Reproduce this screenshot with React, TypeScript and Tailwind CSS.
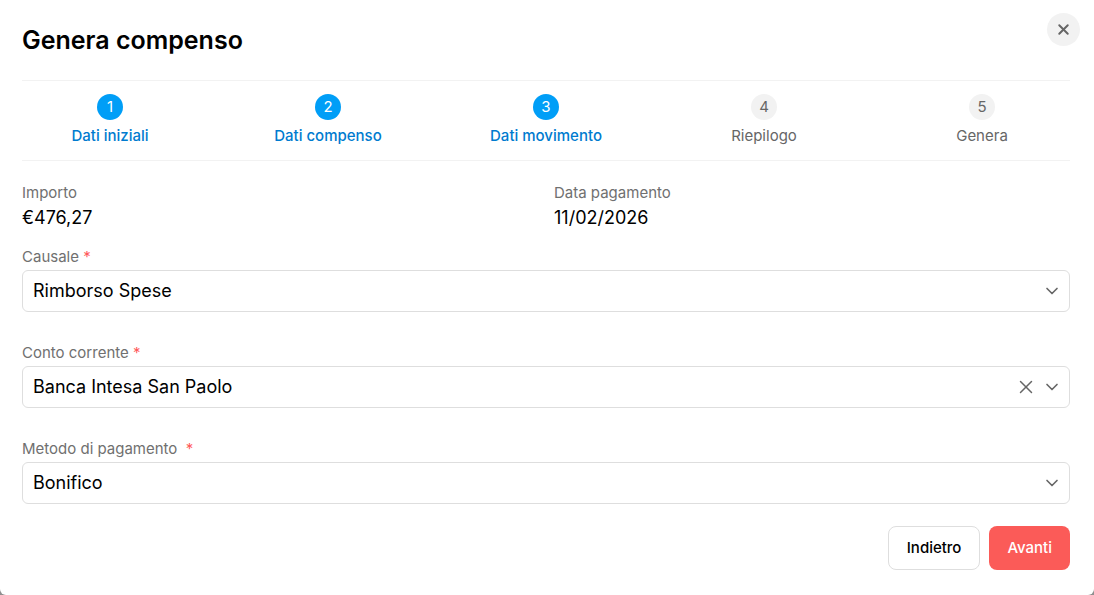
import { ReactNode } from "react";
import { ChevronDown, X } from "lucide-react";
import { clsx } from "clsx";

interface SelectFieldProps {
    id: string;
    label: string;
    options: string[];
    clearable?: boolean;
}

const steps = ["Dati iniziali", "Dati compenso", "Dati movimento", "Riepilogo", "Genera"];
const currentStep = 3;

function Step({ number, label }: { number: number; label: string }) {
    const active = number <= currentStep;

    return (
        <li className="flex flex-1 flex-col items-center gap-1">
            <span className={clsx("flex size-[26px] items-center justify-center rounded-full text-[15px]", active ? "bg-[#009ef7] text-white" : "bg-[#f2f2f2] text-[#666666]")}>
                {number}
            </span>
            <span className={clsx("text-[15px] leading-6", active ? "font-medium text-[#007bcf]" : "text-[#666666]")}>{label}</span>
        </li>
    );
}

function Info({ label, children }: { label: string; children: ReactNode }) {
    return (
        <div>
            <dt className="text-[15px] leading-6 text-[#707070]">{label}</dt>
            <dd className="text-lg leading-[26px] text-black">{children}</dd>
        </div>
    );
}

function SelectField({ id, label, options, clearable }: SelectFieldProps) {
    return (
        <div>
            <label htmlFor={id} className="block text-[15px] leading-[26px] text-[#707070]">
                {label} <span className="text-[#ff5a5a]">*</span>
            </label>
            <div className="relative">
                <select id={id} className="h-[42px] w-full appearance-none rounded-md border border-[#dedede] bg-white px-[10px] text-lg text-black">
                    {options.map((option) => (
                        <option key={option}>{option}</option>
                    ))}
                </select>
                {clearable && (
                    <button type="button" aria-label="Cancella" className="absolute top-1/2 right-[33px] -translate-y-1/2 text-[#666666]">
                        <X className="size-[22px]" strokeWidth={1.6} />
                    </button>
                )}
                <ChevronDown className="pointer-events-none absolute top-1/2 right-2 size-5 -translate-y-1/2 text-[#666666]" />
            </div>
        </div>
    );
}

export default function App() {
    return (
        <div className="min-h-screen bg-[#8f8f8f] font-[Inter,sans-serif]">
            <main className="min-h-screen rounded-b-md bg-white pt-[13px] pr-6 pb-6 pl-[22px]">
                <header className="flex items-start justify-between pb-6">
                    <h1 className="pt-[11px] text-[25px] leading-8 font-semibold text-black">Genera compenso</h1>
                    <button type="button" aria-label="Chiudi" className="-mr-[10px] flex size-[33px] items-center justify-center rounded-full bg-[#f2f2f2] text-[#666666]">
                        <X className="size-[17px]" strokeWidth={2.75} />
                    </button>
                </header>

                <div className="border-y border-[#f2f2f2] pt-[13px] pb-3">
                    {/* the row bleeds past the rules on both sides */}
                    <ol className="-mx-[21px] flex">
                        {steps.map((label, index) => (
                            <Step key={label} number={index + 1} label={label} />
                        ))}
                    </ol>
                </div>

                <form>
                    <dl className="grid grid-cols-2 gap-4 pt-5 pb-[13px]">
                        <Info label="Importo">€476,27</Info>
                        <Info label="Data pagamento">11/02/2026</Info>
                    </dl>
                    <div className="flex flex-col gap-7">
                        <SelectField id="causale" label="Causale" options={["Rimborso Spese"]} />
                        <SelectField id="conto" label="Conto corrente" options={["Banca Intesa San Paolo"]} clearable />
                        <SelectField id="metodo" label={"Metodo di pagamento\u00a0"} options={["Bonifico"]} />
                    </div>
                    <div className="mt-[22px] flex justify-end gap-[9px]">
                        <button type="button" className="h-11 rounded-lg border border-[#dedede] px-[18px] text-[15px] font-medium text-black">
                            Indietro
                        </button>
                        <button type="submit" className="h-11 rounded-lg bg-[#fb5b58] px-[18px] text-[15px] font-medium text-white">
                            Avanti
                        </button>
                    </div>
                </form>
            </main>
        </div>
    );
}
